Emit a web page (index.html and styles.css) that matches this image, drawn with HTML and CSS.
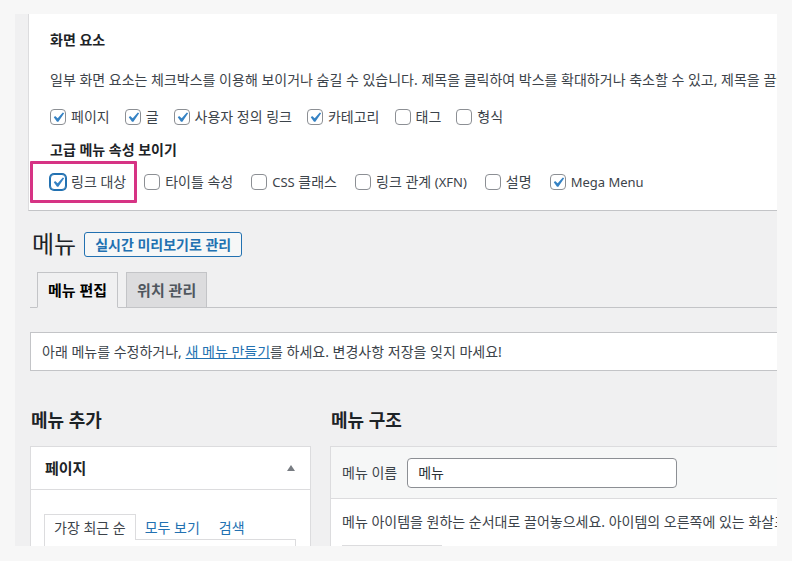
FILE: index.html
```html
<!DOCTYPE html>
<html lang="ko">
<head>
<meta charset="utf-8">
<title>메뉴</title>
<link rel="stylesheet" href="styles.css">
</head>
<body>
<div class="frame">
  <div class="screen-meta">
    <h5 class="meta-title">화면 요소</h5>
    <p class="meta-desc">일부 화면 요소는 체크박스를 이용해 보이거나 숨길 수 있습니다. 제목을 클릭하여 박스를 확대하거나 축소할 수 있고, 제목을 끌어서 순서를 바꿀 수 있습니다.</p>
    <div class="prefs prefs-first">
      <label class="pref"><span class="cb on"><svg viewBox="3 3 14 14"><path d="M14.83 4.89l1.34.94-5.81 8.38H9.02L5.78 9.67l1.34-1.250 2.57 2.4z"/></svg></span>페이지</label>
      <label class="pref"><span class="cb on"><svg viewBox="3 3 14 14"><path d="M14.83 4.89l1.34.94-5.81 8.38H9.02L5.78 9.67l1.34-1.25 2.57 2.4z"/></svg></span>글</label>
      <label class="pref"><span class="cb on"><svg viewBox="3 3 14 14"><path d="M14.83 4.89l1.34.94-5.81 8.38H9.02L5.78 9.67l1.34-1.25 2.57 2.4z"/></svg></span>사용자 정의 링크</label>
      <label class="pref"><span class="cb on"><svg viewBox="3 3 14 14"><path d="M14.83 4.89l1.34.94-5.81 8.38H9.02L5.78 9.67l1.34-1.25 2.57 2.4z"/></svg></span>카테고리</label>
      <label class="pref"><span class="cb"></span>태그</label>
      <label class="pref"><span class="cb"></span>형식</label>
    </div>
    <h5 class="meta-title meta-title-2">고급 메뉴 속성 보이기</h5>
    <div class="prefs prefs-second">
      <label class="pref"><span class="cb on focus"><svg viewBox="3 3 14 14"><path d="M14.83 4.89l1.34.94-5.81 8.38H9.02L5.78 9.67l1.34-1.25 2.57 2.4z"/></svg></span>링크 대상</label>
      <label class="pref"><span class="cb"></span>타이틀 속성</label>
      <label class="pref"><span class="cb"></span><span class="lat">CSS</span>&nbsp;클래스</label>
      <label class="pref"><span class="cb"></span>링크 관계&nbsp;<span class="lat">(XFN)</span></label>
      <label class="pref"><span class="cb"></span>설명</label>
      <label class="pref"><span class="cb on"><svg viewBox="3 3 14 14"><path d="M14.83 4.89l1.34.94-5.81 8.38H9.02L5.78 9.67l1.34-1.25 2.57 2.4z"/></svg></span><span class="lat">Mega Menu</span></label>
    </div>
    <div class="highlight"></div>
  </div>

  <div class="wrap">
    <div class="title-row">
      <h1 class="page-title">메뉴</h1>
      <a class="title-action" href="#">실시간 미리보기로 관리</a>
    </div>

    <nav class="nav-tabs">
      <a class="nav-tab active" href="#">메뉴 편집</a>
      <a class="nav-tab" href="#">위치 관리</a>
    </nav>

    <div class="manage">아래 메뉴를 수정하거나, <a class="link" href="#">새 메뉴 만들기</a>를 하세요. 변경사항 저장을 잊지 마세요!</div>

    <div class="columns">
      <div class="col-left">
        <h2 class="col-title">메뉴 추가</h2>
        <div class="box">
          <div class="box-head">
            <span class="box-title">페이지</span>
            <span class="arrow"></span>
          </div>
          <div class="box-body">
            <div class="inner-tabs">
              <span class="inner-tab active">가장 최근 순</span>
              <a class="inner-tab" href="#">모두 보기</a>
              <a class="inner-tab" href="#">검색</a>
            </div>
            <div class="inner-panel"></div>
          </div>
        </div>
      </div>
      <div class="col-right">
        <h2 class="col-title">메뉴 구조</h2>
        <div class="box menu-box">
          <div class="menu-head">
            <label class="menu-name-label">메뉴 이름</label>
            <div class="menu-name-input">메뉴</div>
          </div>
          <div class="menu-body">
            <p class="menu-instr">메뉴 아이템을 원하는 순서대로 끌어놓으세요. 아이템의 오른쪽에 있는 화살표를 클릭하면 추가 설정 옵션이 나타납니다.</p>
            <div class="stub"></div>
          </div>
        </div>
      </div>
    </div>
  </div>
</div>
</body>
</html>
```

FILE: styles.css
```css
html, body {
  margin: 0;
  padding: 0;
}
body {
  background: #f7f7f7;
  font-family: "Noto Sans", "Noto Sans CJK KR", sans-serif;
  font-size: 14px;
  color: #3c434a;
  width: 792px;
  height: 561px;
  overflow: hidden;
}
.lat {
  font-size: 13px;
}
.frame {
  margin: 14px 0 0 15px;
  width: 762px;
  height: 532px;
  overflow: hidden;
  background: #f0f0f1;
}

/* screen options */
.screen-meta {
  position: relative;
  margin-left: 13px;
  background: #fff;
  border-left: 1px solid #dcdcde;
  border-bottom: 1px solid #c3c4c7;
  padding: 16px 0 16px 21px;
  height: 164px;
  white-space: nowrap;
}
.meta-title {
  margin: 0;
  font-size: 14px;
  font-weight: 700;
  line-height: 20px;
  color: #1d2327;
}
.meta-title-2 {
  margin-top: 11px;
}
.meta-desc {
  margin: 20px 0 0;
  line-height: 20px;
}
.prefs {
  display: flex;
  align-items: center;
  height: 24px;
}
.prefs-first { margin-top: 15px; }
.prefs-second { margin-top: 10px; }
.pref {
  display: flex;
  align-items: center;
  margin-right: 15px;
  line-height: 24px;
}
.prefs-second .pref {
  margin-right: 18px;
}
.cb {
  box-sizing: border-box;
  width: 16px;
  height: 16px;
  border: 1px solid #8c8f94;
  border-radius: 4px;
  background: #fff;
  margin-right: 5px;
  display: flex;
  align-items: center;
  justify-content: center;
  flex: none;
}
.cb svg {
  width: 15px;
  height: 15px;
  fill: #3582c4;
}
.cb.focus {
  border-color: #2271b1;
  box-shadow: 0 0 0 1px #2271b1;
}
.highlight {
  position: absolute;
  left: 1px;
  top: 147px;
  width: 101px;
  height: 36px;
  border: 3px solid #d63384;
  border-radius: 1px;
}

/* main wrap */
.wrap {
  padding-left: 15px;
}
.title-row {
  display: flex;
  align-items: center;
  margin-top: 18px;
  height: 30px;
}
.page-title {
  margin: 0 0 0 2px;
  font-size: 24px;
  font-weight: 400;
  line-height: 30px;
  color: #1d2327;
}
.title-action {
  margin-left: 8px;
  box-sizing: border-box;
  height: 25px;
  line-height: 23px;
  padding: 0 10px;
  border: 1px solid #2271b1;
  border-radius: 3px;
  background: #f6f7f7;
  color: #2271b1;
  font-size: 14px;
  font-weight: 600;
  text-decoration: none;
}

.nav-tabs {
  display: flex;
  margin-top: 13px;
  padding-left: 7px;
  border-bottom: 1px solid #c3c4c7;
  height: 35px;
}
.nav-tab {
  display: block;
  height: 34px;
  line-height: 34px;
  padding: 0 10px;
  border: 1px solid #c3c4c7;
  margin-right: 8px;
  margin-bottom: -1px;
  background: #dcdcde;
  color: #50575e;
  font-size: 15px;
  font-weight: 600;
  text-decoration: none;
}
.nav-tab.active {
  background: #f0f0f1;
  color: #000;
  border-bottom-color: #f0f0f1;
}

.manage {
  margin-top: 24px;
  background: #fff;
  border: 1px solid #c3c4c7;
  border-right: none;
  padding: 9px 11px;
  line-height: 19px;
  white-space: nowrap;
}
.link {
  color: #2271b1;
  text-decoration: underline;
}

.columns {
  display: flex;
  margin-top: 37px;
}
.col-left {
  width: 281px;
  flex: none;
}
.col-right {
  margin-left: 19px;
  flex: 1;
  min-width: 0;
}
.col-title {
  margin: 0 0 14px 1px;
  font-size: 18px;
  font-weight: 600;
  line-height: 24px;
  color: #1d2327;
}
.box {
  background: #fff;
  border: 1px solid #dcdcde;
}
.box-head {
  display: flex;
  align-items: center;
  justify-content: space-between;
  height: 42px;
  padding: 0 15px 0 14px;
  border-bottom: 1px solid #dcdcde;
}
.box-title {
  font-size: 15px;
  font-weight: 600;
  color: #1d2327;
  line-height: 42px;
}
.arrow {
  width: 0;
  height: 0;
  border-left: 4px solid transparent;
  border-right: 4px solid transparent;
  border-bottom: 6px solid #787c82;
}
.box-body {
  padding: 24px 13px 0;
  height: 60px;
}
.inner-tabs {
  display: flex;
  position: relative;
  z-index: 1;
}
.inner-tab {
  display: block;
  line-height: 25px;
  padding: 0 9px;
  border: 1px solid transparent;
  border-bottom: none;
  color: #2271b1;
  text-decoration: none;
}
.inner-tab.active {
  border-color: #dcdcde;
  background: #fff;
  color: #3c434a;
}
.inner-tab + .inner-tab {
  margin-left: -1px;
}
.inner-panel {
  margin-top: -1px;
  width: 252px;
  height: 40px;
  border: 1px solid #dcdcde;
  box-sizing: border-box;
}

.menu-box {
  border-right: none;
}
.menu-head {
  display: flex;
  align-items: center;
  height: 51px;
  padding-left: 11px;
  background: #f6f7f7;
  border-bottom: 1px solid #dcdcde;
}
.menu-name-label {
  color: #3c434a;
  line-height: 20px;
}
.menu-name-input {
  box-sizing: border-box;
  margin-left: 10px;
  width: 270px;
  height: 30px;
  line-height: 28px;
  padding: 0 10px;
  border: 1px solid #8c8f94;
  border-radius: 4px;
  background: #fff;
  color: #2c3338;
}
.menu-body {
  padding: 13px 0 0 11px;
  height: 60px;
  background: #fff;
}
.menu-instr {
  margin: 0;
  line-height: 20px;
  white-space: nowrap;
}
.stub {
  margin-top: 13px;
  width: 98px;
  height: 12px;
  border-top: 1px solid #dcdcde;
  border-left: 1px solid #dcdcde;
  border-right: 1px solid #dcdcde;
}
```
